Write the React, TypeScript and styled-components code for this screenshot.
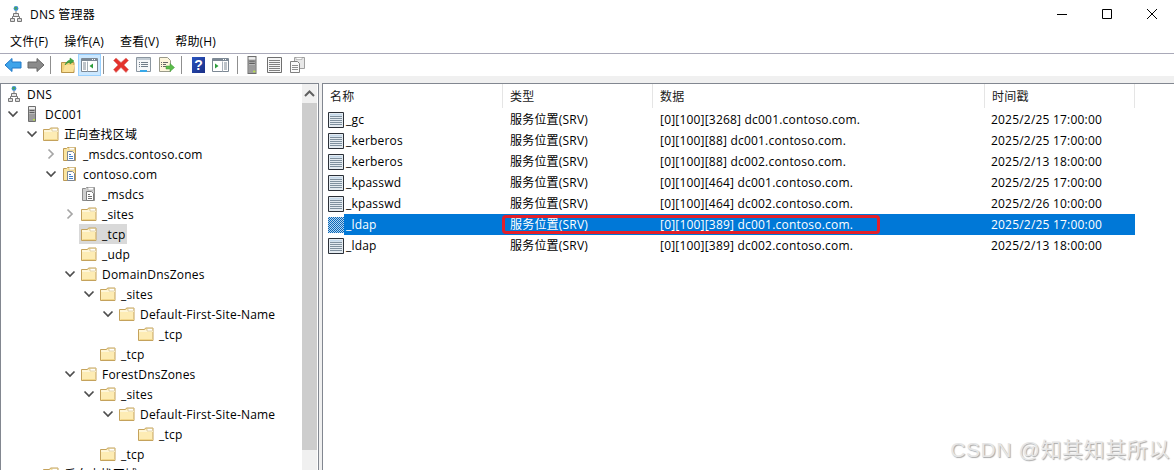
import styled, { createGlobalStyle } from 'styled-components'

const GlobalStyle = createGlobalStyle`
  html, body {
    margin: 0;
    padding: 0;
    background: #fff;
  }
  * {
    box-sizing: border-box;
  }
`

const FONT = `"Open Sans", "Noto Sans CJK SC", sans-serif`

/* ---------- icons ---------- */

const Svg = styled.svg`
  display: block;
  flex: none;
`

const FolderIcon = () => (
  <Svg width='16' height='16' viewBox='0 0 16 16'>
    <path d='M.5 3.500h6l1-1.500h7.500v12.500H.5z' fill='#fdecb4' stroke='#c4a25c' />
    <path d='M1 4h14v2H1z' fill='#fef6d8' />
    <path d='M9 2.500h5.500V5H9z' fill='#fff' stroke='#d2b878' strokeWidth='.6' />
    <path d='M1.500 13.500h13' stroke='#f3d88c' />
  </Svg>
)

const ZoneIcon = ({ muted }: { muted?: boolean }) => (
  <Svg width='16' height='16' viewBox='0 0 16 16'>
    <path
      d='M1.500 2.500h3l1-1h8v13h-12z'
      fill={muted ? '#cfcfcf' : '#fbe5a0'}
      stroke={muted ? '#8c8c8c' : '#bd9a55'}
    />
    <path d='M7 1.500h5.500V4H7z' fill='#fff' stroke={muted ? '#a0a0a0' : '#d2b878'} strokeWidth='.6' />
    <path d='M5.500 5.500h5l2 2v7h-7z' fill='#fff' stroke={muted ? '#7c7c7c' : '#7d8794'} />
    <path
      d='M7 8.500h2M7 10.500h4M7 12.500h4'
      stroke={muted ? '#707070' : '#3f7fc8'}
      strokeWidth='1'
    />
  </Svg>
)

const ServerIcon = ({ size = 16 }: { size?: number }) => (
  <Svg width={size} height={size} viewBox='0 0 16 16'>
    <path d='M4.500.500h7v15h-7z' fill='#b9b9b9' stroke='#6e6e6e' />
    <path d='M5 1h6v2H5z' fill='#eee' />
    <path d='M5.500 4.500h5M5.500 6.500h5' stroke='#5f5f5f' />
    <path d='M5 8h6v7H5z' fill='#9c9c9c' />
    <path d='M9 13h2v1.500H9z' fill='#b7e04a' />
  </Svg>
)

const DnsIcon = () => (
  <Svg width='16' height='16' viewBox='0 0 16 16'>
    <circle cx='8' cy='2.500' r='2.400' fill='#3f8fd0' />
    <path d='M6.300 1.800c.8-1.200 2-.8 2.900 0-.4 1.200-1.200 1.600-2 2-.4-.8-.6-1.200-.9-2z' fill='#49a84b' />
    <path d='M8 5v2M4.500 12v-1.500h7V12' fill='none' stroke='#777' />
    <path d='M5.500 7.500h5v3h-5z' fill='#e6e6e6' stroke='#777' />
    <path d='M2.500 12.500h4v3h-4zM9.500 12.500h4v3h-4z' fill='#dcdcdc' stroke='#777' />
  </Svg>
)

const RecordIcon = ({ selected }: { selected?: boolean }) => (
  <Svg width='16' height='16' viewBox='0 0 16 16'>
    <defs>
      <pattern id='dither' width='2' height='2' patternUnits='userSpaceOnUse'>
        <rect width='2' height='2' fill='#0a66b8' />
        <rect width='1' height='1' fill='#b4d6f0' />
        <rect x='1' y='1' width='1' height='1' fill='#b4d6f0' />
      </pattern>
    </defs>
    {selected ? (
      <rect width='16' height='16' fill='url(#dither)' />
    ) : (
      <>
        <path d='M.5.500h15v15H.5z' fill='#e4ebf1' stroke='#2b3038' />
        <path d='M2 2h12v1.500H2z' fill='#c4d8ea' />
        <path
          d='M2 4.500h12M2 6.500h12M2 8.500h12M2 10.500h12M2 12.500h12'
          stroke='#7f909e'
        />
      </>
    )}
  </Svg>
)

const Chevron = ({ open }: { open: boolean }) => (
  <Svg width='12' height='12' viewBox='0 0 12 12'>
    {open ? (
      <path d='M1.500 3.500 6 8l4.500-4.500' fill='none' stroke='#4d4d4d' strokeWidth='1.700' />
    ) : (
      <path d='M3.500 1.500 8 6l-4.500 4.500' fill='none' stroke='#a6a6a6' strokeWidth='1.700' />
    )}
  </Svg>
)

const ArrowIcon = ({ back }: { back?: boolean }) => (
  <Svg width='18' height='16' viewBox='0 0 18 16'>
    {back ? (
      <path d='M1 8l7-6.500V5h9v6H8v3.500z' fill='#3ea4ea' stroke='#1f78c8' />
    ) : (
      <path d='M17 8l-7-6.500V5H1v6h9v3.500z' fill='#8b8b8b' stroke='#666' />
    )}
  </Svg>
)

const UpFolderIcon = () => (
  <Svg width='16' height='18' viewBox='0 0 16 18'>
    <path d='M1.500 6.500h12.500v10H1.500z' fill='#f3d27c' stroke='#b8944a' />
    <path d='M3 16l2-7h10l-2 7z' fill='#fbe29a' />
    <path d='M5 9c1-3 3-4.500 5-5V2l4 3-4 3V6c-2 .5-3.500 1.500-5 3z' fill='#43a845' stroke='#2b8a32' strokeWidth='.5' />
  </Svg>
)

const WindowPaneIcon = ({ arrow }: { arrow: 'left' | 'right' }) => (
  <Svg width='17' height='14' viewBox='0 0 17 14'>
    <path d='M.5.500h16v13H.5z' fill='#fff' stroke='#7c8894' />
    <path d='M1 1h15v2H1z' fill='#7c8894' />
    <path d='M11 1h1v1h-1zM13 1h1v1h-1z' fill='#fff' />
    {arrow === 'left' ? (
      <>
        <path d='M2 5h3M2 7h3M2 9h3M2 11h3' stroke='#7c8894' />
        <path d='M6.500 3.500v10' stroke='#a7b1ba' />
        <path d='M12 5.500v5L8.500 8z' fill='#2e9e3c' />
      </>
    ) : (
      <>
        <path d='M3 5.500v5L6.500 8z' fill='#2e9e3c' />
        <path d='M10.500 3.500v10' stroke='#a7b1ba' />
        <path d='M12 5h3M12 7h3M12 9h3M12 11h3' stroke='#7c8894' />
      </>
    )}
  </Svg>
)

const DeleteIcon = () => (
  <Svg width='16' height='16' viewBox='0 0 16 16'>
    <path
      d='M3 1l5 4.500L13 1l2.500 2.500L11 8l4.500 4.500L13 15.500 8 10.500l-5 5L.5 12.500 5 8 .5 3.500z'
      fill='#e4322c'
      stroke='#d9807c'
      strokeWidth='.6'
    />
  </Svg>
)

const PropertiesIcon = () => (
  <Svg width='16' height='16' viewBox='0 0 16 16'>
    <path d='M.5.500h14v14H.5z' fill='#f4f6f8' stroke='#8b96a0' />
    <path d='M1 1h13v2H1z' fill='#c3ccd4' />
    <path d='M3 5.500h1M5 5.500h7M3 7.500h1M5 7.500h7M3 9.500h1M5 9.500h7' stroke='#6f7c88' />
    <path d='M4 13h7v2H4z' fill='#38a8e8' />
  </Svg>
)

const ExportIcon = () => (
  <Svg width='17' height='16' viewBox='0 0 17 16'>
    <path d='M1.500.500h8l3 3v11h-11z' fill='#fdf6dc' stroke='#9a9a8a' />
    <path d='M3 5.500h1M5 5.500h5M3 7.500h1M5 7.500h3M3 9.500h1M5 9.500h3' stroke='#666' />
    <path d='M8 9h4V6.500l4.500 4-4.500 4V12H8z' fill='#5cbc4b' stroke='#3f9a34' strokeWidth='.5' />
  </Svg>
)

const HelpBadge = styled.span`
  display: flex;
  align-items: center;
  justify-content: center;
  width: 13px;
  height: 16px;
  background: linear-gradient(135deg, #2a55c0, #1a2f86);
  color: #fff;
  font: bold 14px "Liberation Sans", sans-serif;
`

const RecordListIcon = () => (
  <Svg width='15' height='16' viewBox='0 0 15 16'>
    <path d='M.5.500h14v15H.5z' fill='#f6f6f6' stroke='#6f6f6f' />
    <path d='M2 3.500h11M2 5.500h11M2 7.500h11M2 9.500h11M2 11.500h11M2 13.500h11' stroke='#808080' />
  </Svg>
)

const CopyIcon = () => (
  <Svg width='15' height='16' viewBox='0 0 15 16'>
    <path d='M4.500.500h10v11h-10z' fill='#e8e8e8' stroke='#a0a0a0' />
    <path d='M6 .500h6V2.500H6z' fill='#fff' stroke='#a0a0a0' strokeWidth='.6' />
    <path d='M.5 4.500h7l2 2v9h-9z' fill='#fbfbfb' stroke='#808080' />
    <path d='M2 8.500h6M2 10.500h6M2 12.500h6' stroke='#909090' />
  </Svg>
)

/* ---------- page ---------- */

const Page = styled.div`
  position: relative;
  width: 1174px;
  height: 470px;
  overflow: hidden;
  background: #fff;
  color: #000;
  font-family: ${FONT};
  font-size: 12px;
  letter-spacing: 0.2px;
  display: flex;
  flex-direction: column;
`

const TitleBar = styled.header`
  height: 28px;
  flex: none;
  display: flex;
  align-items: center;
  padding-left: 8px;
`

const Title = styled.span`
  flex: 1;
  margin: 0 0 1px 6px;
`

const WindowButton = styled.button`
  width: 45px;
  height: 28px;
  display: flex;
  align-items: center;
  justify-content: center;
  padding: 0;
  border: 0;
  background: none;
`

const MenuBar = styled.nav`
  height: 26px;
  flex: none;
  display: flex;
  align-items: center;
  padding: 1px 0 0 3px;
  border-bottom: 1px solid #a9a9b8;
`

const MenuItem = styled.span`
  padding: 0 8px 0 7px;
  margin-right: 1px;
`

const Toolbar = styled.div`
  height: 22px;
  flex: none;
  display: flex;
  align-items: center;
  padding-left: 4px;
`

const ToolButton = styled.button<{ $active?: boolean; $width: number; $gap?: number }>`
  width: ${(p) => p.$width}px;
  height: 22px;
  margin-left: ${(p) => p.$gap ?? 0}px;
  display: flex;
  align-items: center;
  justify-content: center;
  padding: 0;
  border: 1px solid ${(p) => (p.$active ? '#99d1ff' : 'transparent')};
  background: ${(p) => (p.$active ? '#cce8ff' : 'none')};
`

const ToolSeparator = styled.span<{ $margin: string }>`
  width: 1px;
  height: 18px;
  flex: none;
  margin: ${(p) => p.$margin};
  background: #8f8f8f;
`

const Band = styled.div`
  height: 7px;
  flex: none;
  background: #f0f0f0;
`

const Workspace = styled.main`
  flex: 1;
  min-height: 0;
  display: flex;
  background: #f0f0f0;
`

const TreePanel = styled.aside`
  width: 319px;
  flex: none;
  display: flex;
  background: #fff;
  border: 1px solid #828790;
  border-bottom: 0;
  overflow: hidden;
`

const Tree = styled.div`
  flex: 1;
  min-width: 0;
`

const TreeRow = styled.div<{ $depth: number }>`
  height: 20px;
  display: flex;
  align-items: center;
  padding-left: ${(p) => 4 + Math.max(0, p.$depth - 1) * 19}px;
  white-space: nowrap;
`

const Twisty = styled.span`
  width: 19px;
  flex: none;
  display: flex;
  padding-left: 2px;
`

const TreeLabel = styled.span<{ $selected?: boolean; $plain?: boolean }>`
  display: flex;
  align-items: center;
  gap: 5px;
  height: 20px;
  padding: 0 2px 0 ${(p) => (p.$selected ? 2 : p.$plain ? 1 : 0)}px;
  margin-left: ${(p) => (p.$selected ? -2 : 0)}px;
  background: ${(p) => (p.$selected ? '#d9d9d9' : 'transparent')};
`

const Scrollbar = styled.div`
  width: 15px;
  flex: none;
  margin-right: 1px;
  display: flex;
  flex-direction: column;
  background: #f0f0f0;
`

const ScrollArrow = styled.div`
  height: 19px;
  display: flex;
  align-items: center;
  justify-content: center;
`

const ScrollThumb = styled.div`
  height: 347px;
  background: #cdcdcd;
`

const ListPanel = styled.section`
  flex: 1;
  min-width: 0;
  margin-left: 3px;
  background: #fff;
  border: 1px solid #828790;
  border-width: 1px 0 0 1px;
`

const ListGrid = styled.div`
  width: 812px;
`

const HeaderRow = styled.div`
  height: 25px;
  display: grid;
  grid-template-columns: 180px 150px 332px 150px;
  color: #1a1a1a;
`

const HeaderCell = styled.div`
  padding-left: 7px;
  display: flex;
  align-items: center;
  border-right: 1px solid #e5e5e5;
  height: 24px;
`

const ListRow = styled.div`
  position: relative;
  height: 21px;
  display: grid;
  grid-template-columns: 180px 150px 331px 151px;
  align-items: center;
`

const NameCell = styled.div`
  display: flex;
  align-items: center;
  height: 21px;
  padding-left: 5px;
`

const NameText = styled.span<{ $selected?: boolean }>`
  flex: 1;
  height: 21px;
  line-height: 21px;
  padding-left: 2px;
  color: ${(p) => (p.$selected ? '#fff' : '#000')};
  background: ${(p) => (p.$selected ? '#0078d7' : 'transparent')};
`

const Cell = styled.div<{ $selected?: boolean }>`
  height: 21px;
  line-height: 21px;
  padding-left: 7px;
  color: ${(p) => (p.$selected ? '#fff' : '#000')};
  background: ${(p) => (p.$selected ? '#0078d7' : 'transparent')};
  white-space: nowrap;
`

const Annotation = styled.div`
  position: absolute;
  left: 179px;
  top: 1px;
  width: 378px;
  height: 19px;
  border: 3px solid #e2202a;
  border-radius: 4px;
`

const Watermark = styled.div`
  position: absolute;
  right: 4px;
  bottom: 9px;
  font-size: 21px;
  line-height: 22px;
  letter-spacing: 0.6px;
  color: #e6e6e6;
  text-shadow: 1px 1px 1px #a8a8a8;
  font-family: "Liberation Sans", "Noto Sans CJK SC", sans-serif;
  white-space: nowrap;
`

type Kind = 'dns' | 'server' | 'folder' | 'zone' | 'mutedZone'

interface TreeNode {
  label: string
  depth: number
  kind: Kind
  open?: boolean
  selected?: boolean
}

const treeNodes: TreeNode[] = [
  { label: 'DNS', depth: 0, kind: 'dns' },
  { label: 'DC001', depth: 1, kind: 'server', open: true },
  { label: '正向查找区域', depth: 2, kind: 'folder', open: true },
  { label: '_msdcs.contoso.com', depth: 3, kind: 'zone', open: false },
  { label: 'contoso.com', depth: 3, kind: 'zone', open: true },
  { label: '_msdcs', depth: 4, kind: 'mutedZone' },
  { label: '_sites', depth: 4, kind: 'folder', open: false },
  { label: '_tcp', depth: 4, kind: 'folder', selected: true },
  { label: '_udp', depth: 4, kind: 'folder' },
  { label: 'DomainDnsZones', depth: 4, kind: 'folder', open: true },
  { label: '_sites', depth: 5, kind: 'folder', open: true },
  { label: 'Default-First-Site-Name', depth: 6, kind: 'folder', open: true },
  { label: '_tcp', depth: 7, kind: 'folder' },
  { label: '_tcp', depth: 5, kind: 'folder' },
  { label: 'ForestDnsZones', depth: 4, kind: 'folder', open: true },
  { label: '_sites', depth: 5, kind: 'folder', open: true },
  { label: 'Default-First-Site-Name', depth: 6, kind: 'folder', open: true },
  { label: '_tcp', depth: 7, kind: 'folder' },
  { label: '_tcp', depth: 5, kind: 'folder' },
  { label: '反向查找区域', depth: 2, kind: 'folder' },
]

const records = [
  ['_gc', '[0][100][3268] dc001.contoso.com.', '2025/2/25 17:00:00'],
  ['_kerberos', '[0][100][88] dc001.contoso.com.', '2025/2/25 17:00:00'],
  ['_kerberos', '[0][100][88] dc002.contoso.com.', '2025/2/13 18:00:00'],
  ['_kpasswd', '[0][100][464] dc001.contoso.com.', '2025/2/25 17:00:00'],
  ['_kpasswd', '[0][100][464] dc002.contoso.com.', '2025/2/26 10:00:00'],
  ['_ldap', '[0][100][389] dc001.contoso.com.', '2025/2/25 17:00:00'],
  ['_ldap', '[0][100][389] dc002.contoso.com.', '2025/2/13 18:00:00'],
]

const NodeIcon = ({ kind }: { kind: Kind }) => {
  if (kind === 'dns') return <DnsIcon />
  if (kind === 'server') return <ServerIcon />
  if (kind === 'zone') return <ZoneIcon />
  if (kind === 'mutedZone') return <ZoneIcon muted />
  return <FolderIcon />
}

const App = () => {
  return (
    <Page>
      <GlobalStyle />
      <TitleBar>
        <DnsIcon />
        <Title>DNS 管理器</Title>
        <WindowButton aria-label='minimize'>
          <svg width='10' height='10' viewBox='0 0 10 10'>
            <path d='M0 5.500h10' stroke='#000' />
          </svg>
        </WindowButton>
        <WindowButton aria-label='maximize'>
          <svg width='10' height='10' viewBox='0 0 10 10'>
            <path d='M.5.500h9v9h-9z' fill='none' stroke='#000' />
          </svg>
        </WindowButton>
        <WindowButton aria-label='close'>
          <svg width='10' height='10' viewBox='0 0 10 10'>
            <path d='M0 0l10 10M10 0L0 10' stroke='#000' />
          </svg>
        </WindowButton>
      </TitleBar>

      <MenuBar>
        <MenuItem>文件(F)</MenuItem>
        <MenuItem>操作(A)</MenuItem>
        <MenuItem>查看(V)</MenuItem>
        <MenuItem>帮助(H)</MenuItem>
      </MenuBar>

      <Toolbar>
        <ToolButton $width={17}><ArrowIcon back /></ToolButton>
        <ToolButton $width={22} $gap={4}><ArrowIcon /></ToolButton>
        <ToolSeparator $margin='0 7px 0 3px' />
        <ToolButton $width={20}><UpFolderIcon /></ToolButton>
        <ToolButton $active $width={23}><WindowPaneIcon arrow='left' /></ToolButton>
        <ToolSeparator $margin='0 5px 0 2px' />
        <ToolButton $width={23}><DeleteIcon /></ToolButton>
        <ToolButton $width={23}><PropertiesIcon /></ToolButton>
        <ToolButton $width={23}><ExportIcon /></ToolButton>
        <ToolSeparator $margin='0 6px 0 3px' />
        <ToolButton $width={21}><HelpBadge>?</HelpBadge></ToolButton>
        <ToolButton $width={23}><WindowPaneIcon arrow='right' /></ToolButton>
        <ToolSeparator $margin='0 2px 0 5px' />
        <ToolButton $width={23}><ServerIcon size={18} /></ToolButton>
        <ToolButton $width={23}><RecordListIcon /></ToolButton>
        <ToolButton $width={23}><CopyIcon /></ToolButton>
      </Toolbar>
      <Band />

      <Workspace>
        <TreePanel>
          <Tree>
            {treeNodes.map((node, index) => (
              <TreeRow key={index} $depth={node.depth}>
                {node.depth > 0 && (
                  <Twisty>
                    {node.open !== undefined && <Chevron open={node.open} />}
                  </Twisty>
                )}
                <TreeLabel $selected={node.selected} $plain={node.depth === 0}>
                  <NodeIcon kind={node.kind} />
                  <span>{node.label}</span>
                </TreeLabel>
              </TreeRow>
            ))}
          </Tree>
          <Scrollbar>
            <ScrollArrow>
              <svg width='11' height='7' viewBox='0 0 11 7'>
                <path d='M1 6l4.500-4.500L10 6' fill='none' stroke='#606060' strokeWidth='2' />
              </svg>
            </ScrollArrow>
            <ScrollThumb />
          </Scrollbar>
        </TreePanel>

        <ListPanel>
          <ListGrid>
            <HeaderRow>
              <HeaderCell>名称</HeaderCell>
              <HeaderCell>类型</HeaderCell>
              <HeaderCell>数据</HeaderCell>
              <HeaderCell>时间戳</HeaderCell>
            </HeaderRow>
            {records.map(([name, data, time], index) => {
              const selected = index === 5
              return (
                <ListRow key={index}>
                  <NameCell>
                    <RecordIcon selected={selected} />
                    <NameText $selected={selected}>{name}</NameText>
                  </NameCell>
                  <Cell $selected={selected}>服务位置(SRV)</Cell>
                  <Cell $selected={selected}>{data}</Cell>
                  <Cell $selected={selected}>{time}</Cell>
                  {selected && <Annotation />}
                </ListRow>
              )
            })}
          </ListGrid>
        </ListPanel>
      </Workspace>

      <Watermark>CSDN @知其知其所以</Watermark>
    </Page>
  )
}

export default App
